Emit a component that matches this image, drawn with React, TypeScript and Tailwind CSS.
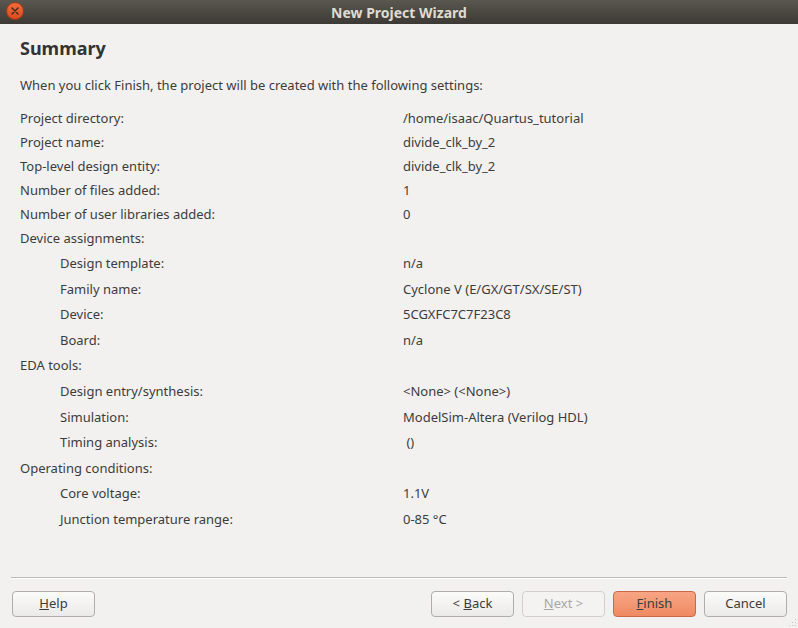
import React from 'react';

type Row = { label: string; value?: string; indent?: boolean };

const rows: Row[] = [
  { label: 'Project directory:', value: '/home/isaac/Quartus_tutorial' },
  { label: 'Project name:', value: 'divide_clk_by_2' },
  { label: 'Top-level design entity:', value: 'divide_clk_by_2' },
  { label: 'Number of files added:', value: '1' },
  { label: 'Number of user libraries added:', value: '0' },
  { label: 'Device assignments:' },
  { label: 'Design template:', value: 'n/a', indent: true },
  { label: 'Family name:', value: 'Cyclone V (E/GX/GT/SX/SE/ST)', indent: true },
  { label: 'Device:', value: '5CGXFC7C7F23C8', indent: true },
  { label: 'Board:', value: 'n/a', indent: true },
  { label: 'EDA tools:' },
  { label: 'Design entry/synthesis:', value: '<None> (<None>)', indent: true },
  { label: 'Simulation:', value: 'ModelSim-Altera (Verilog HDL)', indent: true },
  { label: 'Timing analysis:', value: '\u00a0()', indent: true },
  { label: 'Operating conditions:' },
  { label: 'Core voltage:', value: '1.1V', indent: true },
  { label: 'Junction temperature range:', value: '0-85 \u00b0C', indent: true },
];

function Btn({
  children,
  variant = 'normal',
}: {
  children: React.ReactNode;
  variant?: 'normal' | 'disabled' | 'primary';
}) {
  const styles =
    variant === 'primary'
      ? 'border-[#c8694a] bg-gradient-to-b from-[#f7a584] to-[#ef8a62] text-[#3c3c3c]'
      : variant === 'disabled'
        ? 'border-[#d3d0cc] bg-[#f4f3f2] text-[#a9a7a4]'
        : 'border-[#b1aeaa] bg-gradient-to-b from-[#fbfbfa] to-[#ebeae8] text-[#3c3c3c]';
  return (
    <button className={`w-[83px] h-[26px] rounded-[4px] border text-[13px] flex items-center justify-center ${styles}`}>
      {children}
    </button>
  );
}

export default function App() {
  return (
    <div
      className="w-[798px] h-[628px] bg-[#f2f1f0] flex flex-col text-[#3c3c3c] overflow-hidden relative"
      style={{ fontFamily: '"Noto Sans", "Open Sans", sans-serif' }}
    >
      {/* title bar */}
      <div className="h-[24px] bg-gradient-to-b from-[#5a5650] to-[#3d3a35] flex items-center relative shrink-0">
        <div className="absolute left-[6px] top-[2px] w-[18px] h-[18px] rounded-full bg-gradient-to-b from-[#f26a3a] to-[#dd4b1c] border border-[#9c3a17] flex items-center justify-center">
          <svg width="8" height="8" viewBox="0 0 8 8">
            <path d="M1 1L7 7M7 1L1 7" stroke="#3a2a22" strokeWidth="1.4" strokeLinecap="round" />
          </svg>
        </div>
        <div className="flex-1 text-center text-[14px] font-bold text-[#dfdbd2] leading-none pt-[1px]">
          New Project Wizard
        </div>
      </div>

      {/* content */}
      <div className="flex-1 px-[20px] pt-[12px]">
        <div className="text-[18px] font-bold leading-[24px] text-[#333333]">Summary</div>
        <div className="text-[13px] leading-[18px] mt-[16px]">
          When you click Finish, the project will be created with the following settings:
        </div>
        <div className="mt-[13px] text-[13px]">
          {rows.map((r, i) => (
            <div key={i} className={`flex items-center ${i < 6 ? 'h-[24px]' : 'h-[25.6px]'}`}>
              <div className={`w-[383px] ${r.indent ? 'pl-[40px]' : ''}`}>{r.label}</div>
              <div>{r.value}</div>
            </div>
          ))}
        </div>
      </div>

      {/* footer */}
      <div className="shrink-0 px-[11px]">
        <div className="h-[1px] bg-[#bdbab6] border-b border-white box-content" />
      </div>
      <div className="shrink-0 flex items-center px-[12px] pt-[12px] pb-[11px]">
        <Btn>
          <span>
            <span className="underline">H</span>elp
          </span>
        </Btn>
        <div className="flex-1" />
        <div className="flex gap-[8px] mr-[-1px]">
          <Btn>
            <span>
              &lt; <span className="underline">B</span>ack
            </span>
          </Btn>
          <Btn variant="disabled">
            <span>
              <span className="underline">N</span>ext &gt;
            </span>
          </Btn>
          <Btn variant="primary">
            <span>
              <span className="underline">F</span>inish
            </span>
          </Btn>
          <Btn>Cancel</Btn>
        </div>
      </div>
      {/* resize grip */}
      <svg className="absolute right-[1px] bottom-[1px]" width="10" height="10" viewBox="0 0 10 10">
        {[
          [8, 2],
          [5, 5],
          [8, 5],
          [2, 8],
          [5, 8],
          [8, 8],
        ].map(([x, y], i) => (
          <rect key={i} x={x} y={y} width="1" height="1" fill="#c8c5c1" />
        ))}
      </svg>
    </div>
  );
}
